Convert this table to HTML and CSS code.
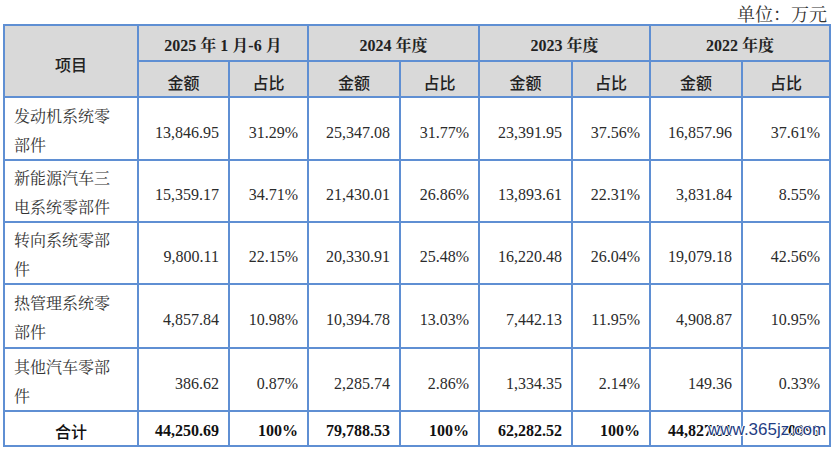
FILE: index.html
```html
<!DOCTYPE html>
<html lang="zh">
<head>
<meta charset="utf-8">
<link rel="stylesheet" href="styles.css">
</head>
<body>
<div class="page">
  <div class="unit">单位：万元</div>
  <table class="tbl">
    <colgroup>
      <col class="c-item"><col class="c-a1"><col class="c-p1"><col class="c-a2"><col class="c-p2"><col class="c-a3"><col class="c-p3"><col class="c-a4"><col class="c-p4">
    </colgroup>
    <thead>
      <tr class="h1">
        <th rowspan="2" class="hs">项目</th>
        <th colspan="2"><b class="num">2025</b> 年 <b class="num">1</b> 月<b class="num">-6</b> 月</th>
        <th colspan="2"><b class="num">2024</b> 年度</th>
        <th colspan="2"><b class="num">2023</b> 年度</th>
        <th colspan="2"><b class="num">2022</b> 年度</th>
      </tr>
      <tr class="h2">
        <th class="hs">金额</th><th class="hs">占比</th>
        <th class="hs">金额</th><th class="hs">占比</th>
        <th class="hs">金额</th><th class="hs">占比</th>
        <th class="hs">金额</th><th class="hs">占比</th>
      </tr>
    </thead>
    <tbody>
      <tr class="r r1">
        <td class="name">发动机系统零<br>部件</td>
        <td>13,846.95</td><td>31.29%</td><td>25,347.08</td><td>31.77%</td><td>23,391.95</td><td>37.56%</td><td>16,857.96</td><td>37.61%</td>
      </tr>
      <tr class="r r2">
        <td class="name">新能源汽车三<br>电系统零部件</td>
        <td>15,359.17</td><td>34.71%</td><td>21,430.01</td><td>26.86%</td><td>13,893.61</td><td>22.31%</td><td>3,831.84</td><td>8.55%</td>
      </tr>
      <tr class="r r3">
        <td class="name">转向系统零部<br>件</td>
        <td>9,800.11</td><td>22.15%</td><td>20,330.91</td><td>25.48%</td><td>16,220.48</td><td>26.04%</td><td>19,079.18</td><td>42.56%</td>
      </tr>
      <tr class="r r4">
        <td class="name">热管理系统零<br>部件</td>
        <td>4,857.84</td><td>10.98%</td><td>10,394.78</td><td>13.03%</td><td>7,442.13</td><td>11.95%</td><td>4,908.87</td><td>10.95%</td>
      </tr>
      <tr class="r r5">
        <td class="name">其他汽车零部<br>件</td>
        <td>386.62</td><td>0.87%</td><td>2,285.74</td><td>2.86%</td><td>1,334.35</td><td>2.14%</td><td>149.36</td><td>0.33%</td>
      </tr>
      <tr class="total">
        <td class="tname">合计</td>
        <td>44,250.69</td><td>100%</td><td>79,788.53</td><td>100%</td><td>62,282.52</td><td>100%</td><td>44,827.31</td><td>100%</td>
      </tr>
    </tbody>
  </table>
  <div class="wm">www.365jz.com</div>
</div>
</body>
</html>
```

FILE: styles.css
```css
html, body {
  margin: 0;
  padding: 0;
  background: #ffffff;
}
.page {
  position: relative;
  width: 831px;
  height: 451px;
  overflow: hidden;
  font-family: "Liberation Serif", "Noto Serif CJK SC", "Noto Sans CJK SC", serif;
  font-size: 16px;
  color: #2b2b2b;
}
.unit {
  height: 24px;
  line-height: 26px;
  font-size: 18px;
  text-align: right;
  padding-right: 4px;
  font-family: "Noto Serif CJK SC", "Noto Sans CJK SC", serif;
  color: #333333;
}
.tbl {
  border-collapse: collapse;
  table-layout: fixed;
  width: 826px;
  margin-left: 3px;
}
.tbl th, .tbl td {
  border: 2px solid #5f8fd3;
  padding: 0;
  overflow: hidden;
  white-space: nowrap;
}
.c-item { width: 134px; }
.c-a1 { width: 91px; }
.c-p1 { width: 79px; }
.c-a2 { width: 92px; }
.c-p2 { width: 79px; }
.c-a3 { width: 93px; }
.c-p3 { width: 78px; }
.c-a4 { width: 92px; }
.c-p4 { width: 88px; }
.tbl thead th {
  background: #d9d9d9;
  font-family: "Liberation Serif", "Noto Serif CJK SC", "Noto Sans CJK SC", serif;
  font-weight: bold;
  text-align: center;
  vertical-align: middle;
  padding-top: 6px;
  line-height: 20px;
  color: #222222;
}
.tbl thead th.hs {
  font-family: "Noto Sans CJK SC", sans-serif;
  font-weight: 500;
}
.num {
  font-family: "Liberation Serif", serif;
  font-weight: bold;
}
.h1 { height: 36px; }
.h2 { height: 36px; }
.tbl tbody td {
  text-align: right;
  padding-right: 9px;
  padding-top: 8px;
  line-height: 20px;
  vertical-align: middle;
}
.r { height: 62px; }
.r1 { height: 63px; }
.r4 { height: 64px; }
.r5 { height: 63px; }
.tbl tbody td.name {
  text-align: left;
  padding-left: 9px;
  padding-right: 0;
  line-height: 29px;
  padding-top: 2px;
  font-family: "Noto Serif CJK SC", "Noto Sans CJK SC", serif;
  color: #333333;
}
.total { height: 35px; }
.tbl .total td {
  font-weight: bold;
  color: #111111;
  padding-top: 4px;
}
.tbl .total td.tname {
  text-align: center;
  padding-right: 0;
  font-family: "Noto Sans CJK SC", sans-serif;
  font-weight: 500;
}
.wm {
  position: absolute;
  left: 708px;
  top: 420px;
  font-family: "Liberation Sans", sans-serif;
  font-size: 17px;
  line-height: 20px;
  color: #1f3e84;
  text-shadow: 1px 0 0 #fff, -1px 0 0 #fff, 0 1px 0 #fff, 0 -1px 0 #fff;
}
```
